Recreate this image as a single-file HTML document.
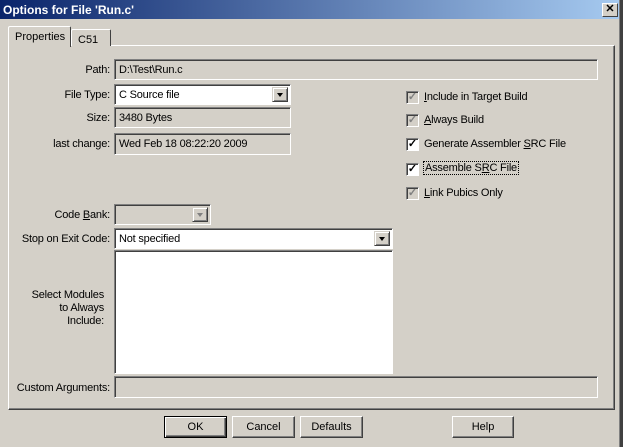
<!DOCTYPE html>
<html><head><style>
*{margin:0;padding:0;box-sizing:border-box}
body{width:623px;height:447px;background:#d4d0c8;font-family:"Liberation Sans",sans-serif;font-size:11px;color:#000;position:relative;overflow:hidden}
.a{position:absolute}
.title{left:0;top:0;width:620px;height:19px;background:linear-gradient(to right,#0a246a,#a6caf0);color:#fff;font-weight:bold;font-size:12px;padding:3px 0 0 3px}
.close{left:602px;top:3px;width:16px;height:14px;background:#d4d0c8;border:1px solid;border-color:#fff #404040 #404040 #fff;font-size:11px;text-align:center;line-height:11px;font-weight:bold}
.rb{left:619px;top:0;width:4px;height:447px;background:#404040;border-left:1px solid #808080}
.panel{left:8px;top:45px;width:607px;height:365px;border:1px solid;border-color:#fff #404040 #404040 #fff;box-shadow:inset -1px -1px 0 #808080}
.tab{border:1px solid;border-bottom:none;border-color:#fff #404040 #404040 #fff;border-radius:2px 2px 0 0;padding-left:6px;background:#d4d0c8}
.fld{border:1px solid;border-color:#808080 #fff #fff #808080;box-shadow:inset 1px 1px 0 #404040;padding:4px 0 0 4px;letter-spacing:-0.2px}
.w{background:#fff}
.lbl{text-align:right;width:110px;left:0;letter-spacing:-0.2px}
.dd{position:absolute;right:2px;top:2px;width:16px;height:15px;background:#d4d0c8;border:1px solid;border-color:#d4d0c8 #404040 #404040 #d4d0c8;box-shadow:inset 1px 1px 0 #fff,inset -1px -1px 0 #808080}
.dd:after{content:"";position:absolute;left:4px;top:5px;border:3.5px solid transparent;border-top:4px solid #000;border-bottom:none}
.dd.g:after{border-top-color:#808080}
.cb{left:406px;width:13px;height:13px;border:1px solid;border-color:#808080 #fff #fff #808080;box-shadow:inset 1px 1px 0 #404040;background:#fff;font-size:11px;line-height:10px;text-align:center;font-weight:bold}
.cb.g{background:#d4d0c8;color:#808080}
.ct{left:424px;letter-spacing:-0.2px}
.btn{top:416px;height:22px;border:1px solid;border-color:#fff #404040 #404040 #fff;box-shadow:inset -1px -1px 0 #808080;text-align:center;line-height:21px}
u{text-decoration:underline}
</style></head><body>
<div class="a title">Options for File 'Run.c'</div>
<div class="a close">✕</div>
<div class="a rb"></div>
<div class="a panel"></div>
<div class="a tab" style="left:71px;top:29px;width:40px;height:17px;padding-top:4px">C51</div>
<div class="a tab" style="left:8px;top:26px;width:63px;height:21px;padding-top:4px;z-index:2">Properties</div>

<div class="a lbl" style="top:64px">Path:</div>
<div class="a fld" style="left:114px;top:59px;width:484px;height:21px">D:\Test\Run.c</div>
<div class="a lbl" style="top:89px">File Type:</div>
<div class="a fld w" style="left:114px;top:84px;width:177px;height:21px">C Source file<div class="dd"></div></div>
<div class="a lbl" style="top:112px">Size:</div>
<div class="a fld" style="left:114px;top:107px;width:177px;height:21px">3480 Bytes</div>
<div class="a lbl" style="top:138px">last change:</div>
<div class="a fld" style="left:114px;top:133px;width:177px;height:22px">Wed Feb 18 08:22:20 2009</div>

<div class="a cb g" style="top:91px">✓</div><div class="a ct" style="top:91px"><u>I</u>nclude in Target Build</div>
<div class="a cb g" style="top:114px">✓</div><div class="a ct" style="top:114px"><u>A</u>lways Build</div>
<div class="a cb" style="top:138px">✓</div><div class="a ct" style="top:138px">Generate Assembler <u>S</u>RC File</div>
<div class="a cb" style="top:163px">✓</div><div class="a ct" style="top:162px;outline:1px dotted #000;padding:0 1px">Assemble S<u>R</u>C File</div>
<div class="a cb g" style="top:187px">✓</div><div class="a ct" style="top:187px"><u>L</u>ink Pubics Only</div>

<div class="a lbl" style="top:209px">Code <u>B</u>ank:</div>
<div class="a fld" style="left:114px;top:204px;width:97px;height:21px"><div class="dd g"></div></div>
<div class="a lbl" style="top:233px">Stop on Exit Code:</div>
<div class="a fld w" style="left:114px;top:228px;width:279px;height:21px">Not specified<div class="dd"></div></div>
<div class="a fld w" style="left:114px;top:250px;width:279px;height:124px"></div>
<div class="a" style="left:0;top:289px;width:104px;text-align:right;line-height:13px;letter-spacing:-0.2px">Select Modules<br>to Always<br>Include:</div>

<div class="a lbl" style="top:382px">Custom Arguments:</div>
<div class="a fld" style="left:114px;top:376px;width:484px;height:22px"></div>

<div class="a btn" style="left:164px;width:63px;border:1px solid #000;box-shadow:inset 1px 1px 0 #fff,inset -1px -1px 0 #404040,inset -2px -2px 0 #808080">OK</div>
<div class="a btn" style="left:232px;width:63px">Cancel</div>
<div class="a btn" style="left:300px;width:63px">Defaults</div>
<div class="a btn" style="left:452px;width:62px">Help</div>
</body></html>
